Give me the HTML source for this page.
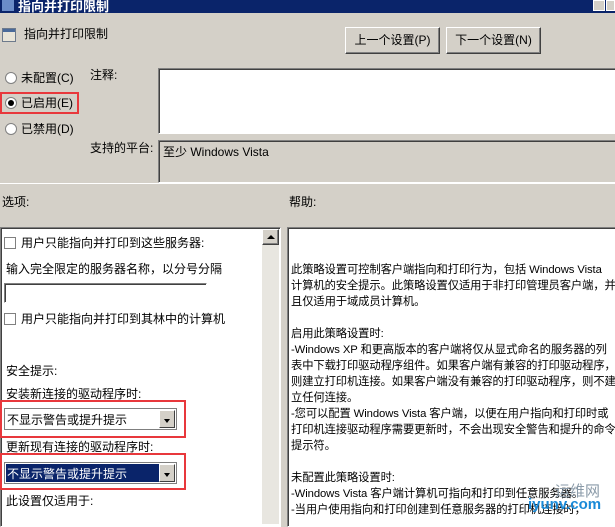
<!DOCTYPE html>
<html><head><meta charset="utf-8"><style>
*{margin:0;padding:0;box-sizing:border-box}
body{width:615px;height:520px;overflow:hidden;background:#d4d0c8;font-family:"Liberation Sans","Noto Sans CJK SC","WenQuanYi Zen Hei",sans-serif;font-size:12px;color:#000;position:relative}
.a{position:absolute;white-space:nowrap}
.btn{position:absolute;background:#d4d0c8;border:1px solid;border-color:#fff #404040 #404040 #fff;box-shadow:inset -1px -1px #808080;text-align:center;line-height:24px}
.sunk{position:absolute;border:1px solid;border-color:#808080 #fff #fff #808080;box-shadow:inset 1px 1px #404040}
.radio{position:absolute;width:12px;height:12px;border-radius:50%;background:#fff;border:1px solid #808080}
.cb{position:absolute;width:12px;height:12px;background:#fff;border:1px solid #808080}
.red{position:absolute;border:2px solid #e8383c}
.sel{position:absolute;background:#fff;border:1px solid #7f7f7f}
.arrow{position:absolute;right:1px;top:1px;bottom:1px;width:16px;background:#d4d0c8;border:1px solid;border-color:#fff #404040 #404040 #fff}
.arrow:after{content:"";position:absolute;left:4px;top:8px;border:3px solid transparent;border-top:4px solid #000}
.help{font-size:11.3px;letter-spacing:-0.1px}
.help div{height:16px}
</style></head><body>
<div class="a" style="left:0;top:0;width:615px;height:13px;background:#0a246a"></div>
<div class="a" style="left:2px;top:0;width:12px;height:11px;background:#6a8cc8"></div>
<div class="a" style="left:18px;top:-4px;color:#fff;font-weight:bold;font-size:13px">指向并打印限制</div>
<div class="a" style="left:593px;top:0;width:12px;height:11px;background:#d4d0c8;border:1px solid #fff"></div>
<div class="a" style="left:606px;top:0;width:9px;height:11px;background:#d4d0c8;border:1px solid #fff"></div>
<div class="a" style="left:2px;top:28px;width:14px;height:14px;background:#e8e4d8;border:1px solid #6d7a8c"></div>
<div class="a" style="left:3px;top:29px;width:12px;height:3px;background:#4a6a9a"></div>
<div class="a" style="left:24px;top:25px">指向并打印限制</div>
<div class="btn" style="left:345px;top:27px;width:95px;height:27px">上一个设置(P)</div>
<div class="btn" style="left:446px;top:27px;width:95px;height:27px">下一个设置(N)</div>
<div class="radio" style="left:5px;top:72px"></div><div class="a" style="left:21px;top:69px">未配置(C)</div>
<div class="radio" style="left:5px;top:97px"></div><div class="a" style="left:8px;top:100px;width:6px;height:6px;border-radius:50%;background:#000"></div>
<div class="a" style="left:21px;top:94px">已启用(E)</div>
<div class="red" style="left:0;top:92px;width:79px;height:22px"></div>
<div class="radio" style="left:5px;top:123px"></div><div class="a" style="left:21px;top:120px">已禁用(D)</div>
<div class="a" style="left:90px;top:66px">注释:</div>
<div class="sunk" style="left:158px;top:68px;width:460px;height:66px;background:#fff"></div>
<div class="a" style="left:90px;top:139px">支持的平台:</div>
<div class="sunk" style="left:158px;top:140px;width:460px;height:43px;background:#d4d0c8"></div>
<div class="a" style="left:163px;top:143px">至少 Windows Vista</div>
<div class="a" style="left:0;top:183px;width:615px;height:1px;background:#fff"></div>
<div class="a" style="left:2px;top:193px">选项:</div>
<div class="a" style="left:289px;top:193px">帮助:</div>
<div class="sunk" style="left:0;top:227px;width:281px;height:300px;background:#fff"></div>
<div class="a" style="left:262px;top:229px;width:17px;height:295px;background:#e8e6e0"></div>
<div class="btn" style="left:262px;top:229px;width:17px;height:16px"></div>
<div class="a" style="left:267px;top:235px;border:4px solid transparent;border-bottom:4px solid #000;border-top:0"></div>
<div class="cb" style="left:4px;top:237px"></div><div class="a" style="left:21px;top:234px">用户只能指向并打印到这些服务器:</div>
<div class="a" style="left:6px;top:260px">输入完全限定的服务器名称，以分号分隔</div>
<div class="sunk" style="left:4px;top:283px;width:203px;height:20px;background:#fff"></div>
<div class="cb" style="left:4px;top:313px"></div><div class="a" style="left:21px;top:310px">用户只能指向并打印到其林中的计算机</div>
<div class="a" style="left:6px;top:362px">安全提示:</div>
<div class="a" style="left:6px;top:385px">安装新连接的驱动程序时:</div>
<div class="sel" style="left:4px;top:408px;width:173px;height:22px"><span class="a" style="left:2px;top:2px">不显示警告或提升提示</span><div class="arrow"></div></div>
<div class="red" style="left:0;top:400px;width:186px;height:38px"></div>
<div class="a" style="left:6px;top:438px">更新现有连接的驱动程序时:</div>
<div class="sel" style="left:4px;top:462px;width:173px;height:22px"><span class="a" style="left:1px;top:1px;width:153px;height:18px;background:#0a246a;color:#fff;padding:1px 0 0 1px">不显示警告或提升提示</span><div class="arrow"></div></div>
<div class="red" style="left:0;top:453px;width:186px;height:37px"></div>
<div class="a" style="left:6px;top:492px">此设置仅适用于:</div>
<div class="sunk" style="left:287px;top:227px;width:335px;height:300px;background:#fff"></div>
<div class="a help" style="left:291px;top:262px;line-height:16px">
<div>此策略设置可控制客户端指向和打印行为，包括 Windows Vista</div>
<div>计算机的安全提示。此策略设置仅适用于非打印管理员客户端，并</div>
<div>且仅适用于域成员计算机。</div>
<div></div>
<div>启用此策略设置时:</div>
<div>-Windows XP 和更高版本的客户端将仅从显式命名的服务器的列</div>
<div>表中下载打印驱动程序组件。如果客户端有兼容的打印驱动程序，</div>
<div>则建立打印机连接。如果客户端没有兼容的打印驱动程序，则不建</div>
<div>立任何连接。</div>
<div>-您可以配置 Windows Vista 客户端，以便在用户指向和打印时或</div>
<div>打印机连接驱动程序需要更新时，不会出现安全警告和提升的命令</div>
<div>提示符。</div>
<div></div>
<div>未配置此策略设置时:</div>
<div>-Windows Vista 客户端计算机可指向和打印到任意服务器。</div>
<div>-当用户使用指向和打印创建到任意服务器的打印机连接时，</div>
</div>
<div class="a" style="left:555px;top:480px;color:#8a9aa8;font-size:15px">运维网</div>
<div class="a" style="left:528px;top:496px;color:#1a8ad8;font-size:15px;font-weight:bold">iyunv.com</div>
</body></html>
